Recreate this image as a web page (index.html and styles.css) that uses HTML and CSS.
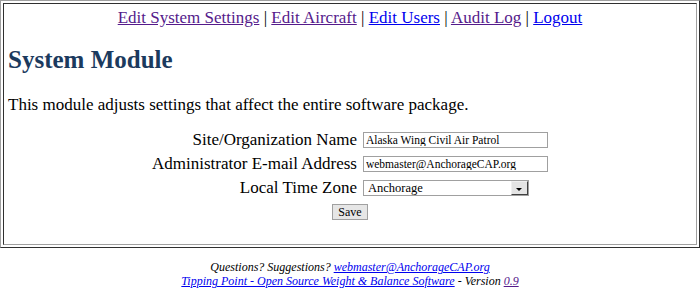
FILE: index.html
```html
<!DOCTYPE html>
<html>
<head>
<meta charset="utf-8">
<title>System Module</title>
<link rel="stylesheet" href="styles.css">
</head>
<body>
<div class="frame">
  <div class="cell">
    <nav class="nav">
      <a class="visited" href="#">Edit System Settings</a> | <a class="visited" href="#">Edit Aircraft</a> | <a href="#">Edit Users</a> | <a class="visited" href="#">Audit Log</a> | <a href="#">Logout</a>
    </nav>
    <h1 class="title">System Module</h1>
    <p class="intro">This module adjusts settings that affect the entire software package.</p>
    <form class="form">
      <div class="grid">
        <label class="label" for="site">Site/Organization Name</label>
        <input class="field" id="site" type="text" value="Alaska Wing Civil Air Patrol">
        <label class="label" for="email">Administrator E-mail Address</label>
        <input class="field" id="email" type="text" value="webmaster@AnchorageCAP.org">
        <label class="label" for="tz">Local Time Zone</label>
        <div class="select">
          <select id="tz" class="select-input"><option>Anchorage</option></select>
          <span class="select-btn"><span class="arrow"></span></span>
        </div>
      </div>
      <div class="actions"><button class="save" type="button">Save</button></div>
    </form>
  </div>
</div>
<footer class="footer">
  <div>Questions? Suggestions? <a href="#">webmaster@AnchorageCAP.org</a></div>
  <div><a href="#">Tipping Point - Open Source Weight &amp; Balance Software</a> - Version <a class="visited" href="#">0.9</a></div>
</footer>
</body>
</html>
```
FILE: styles.css
```css
html, body {
  margin: 0;
  padding: 0;
  background: #fff;
}
body {
  font-family: "Liberation Serif", serif;
  font-size: 17px;
  color: #000;
}
a { color: #0000ee; }
a.visited { color: #551a8b; }

.frame {
  border: 1px solid;
  border-color: #a0a0a0 #303030 #303030 #a0a0a0;
  padding: 2px;
  box-sizing: border-box;
  height: 248px;
}
.cell {
  border: 1px solid;
  border-color: #303030 #a0a0a0 #a0a0a0 #303030;
  height: 100%;
  box-sizing: border-box;
  padding: 4px 4px 0;
}
.nav {
  text-align: center;
  line-height: 20px;
}
.title {
  margin: 17px 0 0;
  font-size: 25px;
  line-height: 30px;
  font-weight: bold;
  color: #1b3a5e;
}
.intro {
  margin: 20px 0 0;
  line-height: 20px;
}
.form { margin-top: 17px; }
.grid {
  display: grid;
  grid-template-columns: auto auto;
  justify-content: center;
  column-gap: 6px;
  row-gap: 8px;
  align-items: center;
}
.label { text-align: right; line-height: 16px; }
.field {
  width: 185px;
  height: 16px;
  box-sizing: border-box;
  border: 1px solid #a0a0a0;
  padding: 0 2px;
  font-family: "Liberation Serif", serif;
  font-size: 11.5px;
  margin: 0;
}
.select {
  display: flex;
  width: 166px;
  height: 16px;
  box-sizing: border-box;
  border: 1px solid #a0a0a0;
  align-items: stretch;
}
.select-input {
  flex: 1;
  min-width: 0;
  appearance: none;
  -webkit-appearance: none;
  border: 0;
  padding: 0 4px;
  margin: 0;
  font-family: "Liberation Serif", serif;
  font-size: 12.5px;
  background: #fff;
  outline: none;
}
.select-btn {
  width: 17px;
  box-sizing: border-box;
  background: #e4e4e4;
  border: 1px solid;
  border-color: #f0f0f0 #404040 #404040 #f0f0f0;
  display: flex;
  align-items: center;
  justify-content: center;
}
.arrow {
  width: 0;
  height: 0;
  border-left: 3px solid transparent;
  border-right: 3px solid transparent;
  border-top: 3px solid #000;
  margin-top: 2px;
}
.actions {
  text-align: center;
  margin-top: 8px;
  line-height: 16px;
}
.save {
  font-family: "Liberation Serif", serif;
  font-size: 12px;
  height: 16px;
  padding: 0 5px;
  border: 1px solid #a0a0a0;
  background: #e6e6e6;
  line-height: 14px;
  margin: 0;
  vertical-align: top;
}
.footer {
  text-align: center;
  font-style: italic;
  font-size: 12px;
  line-height: 14px;
  margin-top: 12px;
}
```
